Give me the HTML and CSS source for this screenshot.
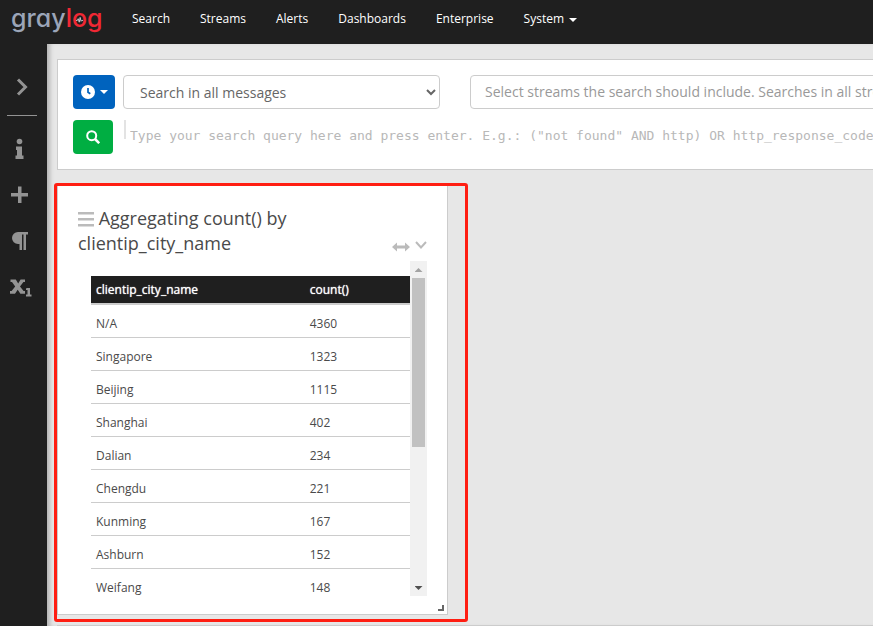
FILE: index.html
```html
<!DOCTYPE html>
<html lang="en">
<head>
<meta charset="utf-8">
<title>Graylog</title>
<link rel="stylesheet" href="styles.css">
</head>
<body>
<header class="topbar">
  <a class="logo" href="#"><span class="logo-gray">gray</span><span class="logo-log">l<span class="logo-o">o<svg class="pulse" viewBox="0 0 8 8"><path d="M0 4.500h1.500l1-2 1.200 4 1-5.500 1.100 4.500.7-1H8"/></svg></span>g</span></a>
  <nav class="nav">
    <a href="#">Search</a>
    <a href="#">Streams</a>
    <a href="#">Alerts</a>
    <a href="#">Dashboards</a>
    <a href="#">Enterprise</a>
    <a href="#">System<span class="caret"></span></a>
  </nav>
</header>
<div class="shell">
  <aside class="sidebar">
    <button class="side-btn toggle" aria-label="Expand"><svg width="20" height="20" viewBox="0 0 20 20"><path class="line" d="M6 2.500l7.500 7.500L6 17.500"/></svg></button>
    <button class="side-btn" aria-label="Info"><svg width="20" height="22" viewBox="0 0 20 22"><circle cx="9.500" cy="3.500" r="2.800"/><path d="M6 8.500h6v9h1.500V21h-8v-3.500H7V12H6z"/></svg></button>
    <button class="side-btn" aria-label="Create"><svg width="20" height="20" viewBox="0 0 20 20"><path d="M8 1.500h3.500V8H18v3.500h-6.500V18H8v-6.500H1V8h7z"/></svg></button>
    <button class="side-btn" aria-label="Formatting"><svg width="20" height="20" viewBox="0 0 20 20"><path d="M8 1h10v2.500h-2V19h-2.500V3.500H12V19H9.500v-6H8A6 6 0 0 1 8 1z"/></svg></button>
    <button class="side-btn" aria-label="Fields"><svg width="22" height="20" viewBox="0 0 22 20"><path d="M.5 2.500h5.300l2.400 4 2.400-4h4.400V5h-1.600l-3.400 4.600L13.600 14H15v2.800h-4.600L7.700 12.700 5 16.800H0V14h1.600l3.600-4.400L2 5H.5zM17 11h3v6.500h1.500v2H16v-2h1.500V13H16v-1.500z"/></svg></button>
  </aside>
  <main class="main">
    <form class="search panel">
      <div class="row">
        <button type="button" class="btn blue" aria-label="Time range"><svg width="14" height="14" viewBox="0 0 14 14"><circle cx="7" cy="7" r="7" fill="#fff"/><path d="M7 3v4.200l2.300 1.600" fill="none" stroke="#0063be" stroke-width="1.700"/></svg><span class="caret"></span></button>
        <select class="field range" aria-label="Time range preset"><option>Search in all messages</option></select>
        <input class="field streams" type="text" aria-label="Streams" placeholder="Select streams the search should include. Searches in all streams if empty.">
      </div>
      <div class="row">
        <button type="button" class="btn green" aria-label="Search"><svg width="14" height="14" viewBox="0 0 14 14"><circle cx="5.700" cy="5.700" r="4.500" fill="none" stroke="#fff" stroke-width="2"/><path d="M9 9l4.200 4.200" stroke="#fff" stroke-width="2.500"/></svg></button>
        <div class="query"><span class="cursor"></span><input type="text" aria-label="Query" placeholder='Type your search query here and press enter. E.g.: ("not found" AND http) OR http_response_code:[400 TO 404]'></div>
      </div>
    </form>
    <section class="widget panel">
      <div class="widget-head">
        <h2><svg class="bars" width="16" height="15" viewBox="0 0 16 15"><path d="M0 0h16v2.500H0zM0 6h16v2.500H0zM0 12h16v2.500H0z"/></svg> Aggregating count() by clientip_city_name</h2>
        <div class="tools">
          <button aria-label="Stretch"><svg width="18" height="10" viewBox="0 0 18 10"><path d="M0 5l5-4.500v3h8v-3L18 5l-5 4.500v-3H5v3z"/></svg></button>
          <button aria-label="Actions"><svg width="12" height="14" viewBox="0 0 12 14"><path class="line" d="M1 2l5 5.500L11 2"/></svg></button>
        </div>
      </div>
      <div class="pane">
        <div class="pane-body">
          <table>
            <thead><tr><th scope="col">clientip_city_name</th><th scope="col">count()</th></tr></thead>
            <tbody>
              <tr><td>N/A</td><td>4360</td></tr>
              <tr><td>Singapore</td><td>1323</td></tr>
              <tr><td>Beijing</td><td>1115</td></tr>
              <tr><td>Shanghai</td><td>402</td></tr>
              <tr><td>Dalian</td><td>234</td></tr>
              <tr><td>Chengdu</td><td>221</td></tr>
              <tr><td>Kunming</td><td>167</td></tr>
              <tr><td>Ashburn</td><td>152</td></tr>
              <tr><td>Weifang</td><td>148</td></tr>
            </tbody>
          </table>
        </div>
        <div class="scrollbar"><span class="arrow up"></span><span class="thumb"></span><span class="arrow down"></span></div>
      </div>
      <span class="resize"></span>
      <span class="highlight"></span>
    </section>
    <section class="panel next"></section>
  </main>
</div>
</body>
</html>
```
FILE: styles.css
```css
* { box-sizing: border-box; }

body {
  margin: 0;
  height: 100vh;
  overflow: hidden;
  display: flex;
  flex-direction: column;
  background: #e7e7e7;
  color: #4a4a4a;
  font: 12px/18px "Open Sans", sans-serif;
}

button {
  border: 0;
  padding: 0;
  background: none;
  font: inherit;
}

/* Top bar */
.topbar {
  flex: none;
  display: flex;
  height: 44px;
  padding-left: 11px;
  background: #1f1f1f;
}

.logo {
  width: 106px;
  font: 500 25px/36px Inter, sans-serif;
  font-feature-settings: "cv11";
  text-decoration: none;
}

.logo-gray { color: #9ba5b8; }
.logo-log { color: #f02834; }
.logo-o { position: relative; }

.pulse {
  position: absolute;
  left: 4px;
  top: 13px;
  width: 7px;
  height: 8px;
  fill: none;
  stroke: #d5d8df;
}

.nav { display: flex; }

.nav a {
  padding: 10px 15px;
  color: #fff;
  text-decoration: none;
}

.caret {
  display: inline-block;
  margin-left: 5px;
  vertical-align: middle;
  border: 4px solid transparent;
  border-top-color: #fff;
  border-bottom: 0;
}

/* Side bar */
.shell {
  flex: 1;
  min-height: 0;
  display: flex;
}

.sidebar {
  flex: none;
  width: 47px;
  padding: 17px 10px 17px 7px;
  background: #1f1f1f;
}

.side-btn {
  display: flex;
  align-items: center;
  width: 100%;
  height: 46px;
  padding-left: 3px;
}

.side-btn svg {
  flex: none;
  fill: #939393;
}

.toggle {
  height: 55px;
  margin-bottom: 10px;
  padding: 0 0 3px 5px;
  border-bottom: 1px solid #939393;
}

.side-btn .line {
  fill: none;
  stroke: #939393;
  stroke-width: 3;
}

/* Content */
.main {
  flex: 1;
  min-width: 0;
  overflow: hidden;
  padding: 15px 0 0 10px;
  box-shadow: inset 5px 0 4px -2px #b4b4b4;
}

.panel {
  border: 1px solid #ccc;
  background: #fff;
}

.search {
  min-width: 1100px;
  margin-bottom: 15px;
  padding: 15px;
}

.row { display: flex; }
.row + .row { margin-top: 11px; }

.btn {
  flex: none;
  display: flex;
  align-items: center;
  justify-content: center;
  height: 34px;
  border-radius: 4px;
}

.blue { width: 42px; background: #0063be; }
.green { width: 40px; background: #00ae42; }

.field {
  height: 34px;
  border: 1px solid #ccc;
  border-radius: 4px;
  background: #fff;
  color: #666;
  font: 14px/20px "Open Sans", sans-serif;
}

.range {
  width: 317px;
  margin: 0 30px 0 8px;
  padding: 0 0 0 12px;
}

.streams {
  flex: 1;
  padding: 0 14px 2px;
}

.streams::placeholder { color: #999; }

.query {
  flex: 1;
  display: flex;
  margin-left: 11px;
}

.cursor {
  width: 2px;
  height: 19px;
  background: #e3e3e3;
}

.query input {
  flex: 1;
  height: 30px;
  border: 0;
  padding: 0 4px;
  font: 13px/18px "DejaVu Sans Mono", monospace;
}

.query input::placeholder { color: #b8b8b8; }

/* Widget */
.widget {
  position: relative;
  width: 391px;
  margin-bottom: 10px;
  padding: 20px 20px 18px;
}

.widget-head {
  display: flex;
  align-items: flex-end;
  justify-content: space-between;
  margin-bottom: 5px;
}

h2 {
  width: 260px;
  margin: 0;
  font: 400 18px/25px "Open Sans", sans-serif;
}

.bars {
  vertical-align: -2px;
  fill: #bbb;
}

.tools {
  display: flex;
  align-items: center;
  gap: 5px;
  padding-bottom: 2px;
}

.tools button { display: flex; }
.tools svg { fill: #bbb; }

.tools .line {
  fill: none;
  stroke: #bbb;
  stroke-width: 2;
}

.pane {
  display: flex;
  height: 335px;
  margin-left: 13px;
}

.pane-body {
  flex: 1;
  overflow: hidden;
  padding-top: 15px;
}

table {
  width: 100%;
  border-collapse: separate;
  border-spacing: 0;
  table-layout: fixed;
}

th {
  padding: 4px 5px;
  height: 29px;
  border-bottom: 2px solid #ccc;
  background: #1f1f1f;
  color: #fff;
  font-weight: 400;
  text-align: left;
  text-shadow: 0 0 1px #fff;
}

th:first-child { width: 67%; }

td {
  height: 33px;
  padding: 10px 5px 4px;
  border-bottom: 1px solid #ccc;
}

.scrollbar {
  flex: none;
  display: flex;
  flex-direction: column;
  align-items: center;
  width: 17px;
  background: #f1f1f1;
}

.thumb {
  width: 13px;
  height: 169px;
  margin-bottom: auto;
  background: #c1c1c1;
}

.arrow {
  width: 8px;
  height: 4px;
  margin: 7px 0 6px;
  clip-path: polygon(0 100%, 50% 0, 100% 100%);
  background: #a3a3a3;
}

.down {
  clip-path: polygon(0 0, 50% 100%, 100% 0);
  background: #505050;
}

.resize {
  position: absolute;
  right: 3px;
  bottom: 3px;
  width: 6px;
  height: 6px;
  border: solid #666;
  border-width: 0 2px 2px 0;
}

.highlight {
  position: absolute;
  inset: -3px -21px -8px -4px;
  border: 3px solid #ff1e12;
  border-radius: 3px;
}

.next {
  min-width: 1100px;
  height: 200px;
}
```
